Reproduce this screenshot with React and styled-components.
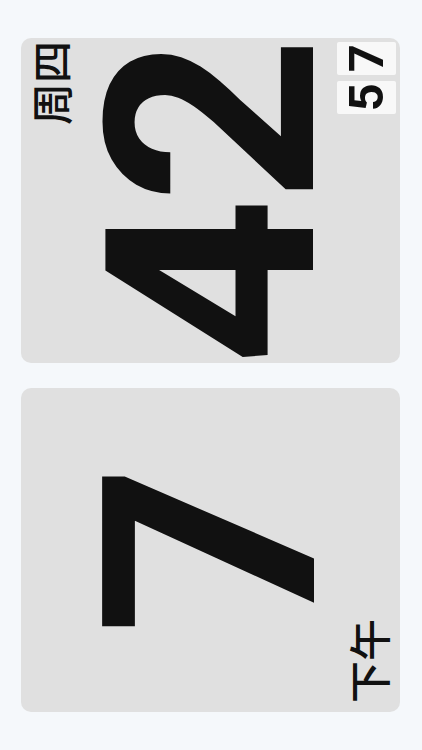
import React from "react";
import styled, { createGlobalStyle } from "styled-components";

const Global = createGlobalStyle`
  html, body { margin: 0; padding: 0; background: #f5f8fb; }
  #root { height: 100vh; }
`;

const Screen = styled.main`
  box-sizing: border-box;
  height: 100vh;
  padding: 38px 22px 38px 21px;
  display: flex;
  flex-direction: column;
  gap: 25px;
  background: #f5f8fb;
`;

const Card = styled.section`
  flex: 1;
  min-height: 0;
  background: #e0e0e0;
  border-radius: 10px;
  display: grid;
  grid-template-columns: auto 1fr auto;
  grid-template-rows: auto 1fr auto;
  overflow: hidden;
`;

const Sideways = styled.span`
  writing-mode: vertical-rl;
  text-orientation: sideways;
  transform: rotate(180deg);
  white-space: nowrap;
  line-height: 1;
`;

const BigNumber = styled(Sideways)`
  grid-area: 1 / 1 / 4 / 4;
  place-self: center;
  margin: ${(p) => p.$shift || 0}px 0 0 5px;
  font-family: Roboto, "Liberation Sans", sans-serif;
  font-weight: 700;
  font-size: ${(p) => p.$size}px;
  letter-spacing: ${(p) => p.$spacing || 0}px;
  color: #111111;
`;

const Label = styled(Sideways)`
  grid-area: ${(p) => p.$area};
  align-self: ${(p) => p.$align};
  justify-self: ${(p) => p.$justify};
  margin: ${(p) => p.$margin};
  font-family: "Noto Sans CJK SC", "Noto Sans", sans-serif;
  font-weight: 500;
  font-size: 42px;
  color: #111111;
  z-index: 1;
`;

const Seconds = styled.div`
  grid-area: 1 / 3 / 2 / 4;
  align-self: start;
  margin: 4px 4px 0 0;
  display: flex;
  flex-direction: column-reverse;
  gap: 6px;
  z-index: 1;
`;

const SecondBox = styled.div`
  width: 59px;
  height: 33px;
  background: #f8f8f8;
  border-radius: 2px;
  display: flex;
  align-items: center;
  justify-content: center;
`;

const SecondDigit = styled(Sideways)`
  font-family: Roboto, "Liberation Sans", sans-serif;
  font-weight: 700;
  font-size: 49px;
  color: #111111;
`;

export default function App() {
  const seconds = "57";
  return (
    <>
      <Global />
      <Screen>
        <Card>
          <Label $area="1 / 1 / 2 / 2" $align="start" $justify="start" $margin="3px 0 0 8px">
            周四
          </Label>
          <BigNumber $size={292} $spacing={-6} $shift={6}>42</BigNumber>
          <Seconds>
            {seconds.split("").map((d, i) => (
              <SecondBox key={i}>
                <SecondDigit>{d}</SecondDigit>
              </SecondBox>
            ))}
          </Seconds>
        </Card>
        <Card>
          <BigNumber $size={298}>7</BigNumber>
          <Label $area="3 / 3 / 4 / 4" $align="end" $justify="end" $margin="0 11px 9px 0">
            下午
          </Label>
        </Card>
      </Screen>
    </>
  );
}
